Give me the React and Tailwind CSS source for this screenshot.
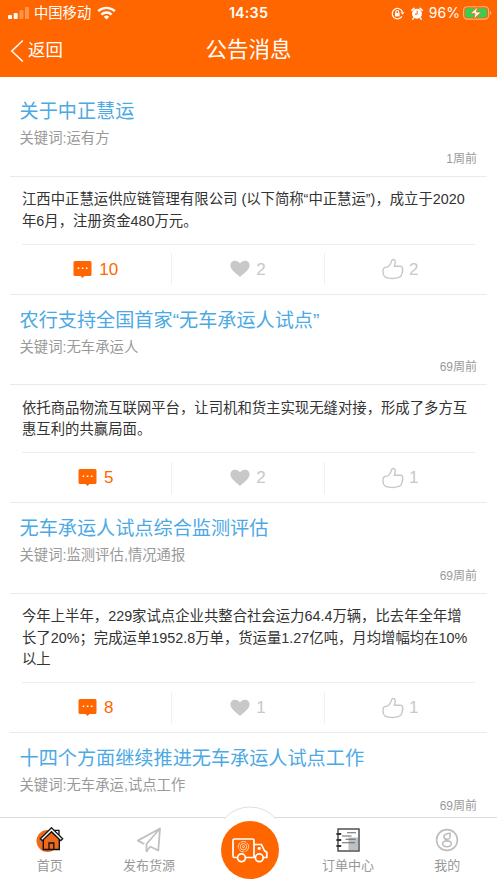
import { Fragment } from 'react';

const notices = [
  {
    id: 1,
    title: '关于中正慧运',
    keywords: '运有方',
    time: '1周前',
    lines: ['江西中正慧运供应链管理有限公司 (以下简称“中正慧运”)，成立于2020', '年6月，注册资金480万元。'],
    comments: 10,
    likes: 2,
    thumbs: 2,
  },
  {
    id: 2,
    title: '农行支持全国首家“无车承运人试点”',
    keywords: '无车承运人',
    time: '69周前',
    lines: ['依托商品物流互联网平台，让司机和货主实现无缝对接，形成了多方互', '惠互利的共赢局面。'],
    comments: 5,
    likes: 2,
    thumbs: 1,
  },
  {
    id: 3,
    title: '无车承运人试点综合监测评估',
    keywords: '监测评估,情况通报',
    time: '69周前',
    lines: ['今年上半年，229家试点企业共整合社会运力64.4万辆，比去年全年增', '长了20%；完成运单1952.8万单，货运量1.27亿吨，月均增幅均在10%', '以上'],
    comments: 8,
    likes: 1,
    thumbs: 1,
  },
  {
    id: 4,
    title: '十四个方面继续推进无车承运人试点工作',
    keywords: '无车承运,试点工作',
    time: '69周前',
  },
];

function StatusBar() {
  return (
    <div className="grid h-[26px] grid-cols-3 items-center px-2">
      <div className="flex items-center">
        <svg width="21" height="14" viewBox="0 0 21 14" fill="#fff">
          <rect x="0" y="9" width="4" height="4" rx="1" />
          <rect x="5.7" y="7" width="4" height="6" rx="1" />
          <rect x="11.4" y="4" width="4" height="9" rx="1" opacity=".3" />
          <rect x="17" y="1" width="4" height="12" rx="1" opacity=".3" />
        </svg>
        <span className="ml-[5px] text-[14.3px] leading-none">中国移动</span>
        <svg className="ml-[6px]" width="19" height="14" viewBox="0 0 19 14" fill="none" stroke="#fff" strokeWidth="2.4">
          <path d="M1.2 5.2a12 12 0 0 1 16.6 0" />
          <path d="M4.4 8.6a7.4 7.4 0 0 1 10.2 0" />
          <path d="M9.5 13.4 6.8 10.7a4 4 0 0 1 5.4 0z" fill="#fff" stroke="none" />
        </svg>
      </div>
      <div className="text-center font-[Inter] text-[14.3px] leading-none font-semibold tracking-[0.2px]">14:35</div>
      <div className="-mr-[3px] flex items-center justify-end">
        <svg width="14" height="13" viewBox="0 0 14 13" fill="none" stroke="#fff" strokeWidth="1.2">
          <path d="M10.9 9.4A5.2 5.2 0 1 1 11.4 5" />
          <path d="M9.5 5.2h4l-2 2.6z" fill="#fff" stroke="none" />
          <rect x="4" y="6" width="4.6" height="3.4" fill="#fff" stroke="none" />
          <path d="M4.9 6V4.9a1.4 1.4 0 0 1 2.8 0V6" />
        </svg>
        <svg className="ml-[6px]" width="12" height="13" viewBox="0 0 12 13">
          <circle cx="6" cy="6.8" r="5" fill="#fff" />
          <path d="M.8 3.2 3 1.2M11.2 3.2 9 1.2M2.6 11l-.8 1.1M9.4 11l.8 1.1" stroke="#fff" strokeWidth="1.5" strokeLinecap="round" />
          <path d="M6.2 3.8v3.4H3.8" fill="none" stroke="#ff6600" strokeWidth="1" />
        </svg>
        <span className="ml-[6px] font-[Inter] text-[14px] leading-none">96%</span>
        <svg className="ml-[3px]" width="29" height="14" viewBox="0 0 29 14">
          <rect x=".6" y=".7" width="25" height="12.4" rx="3.6" fill="none" stroke="#fff" strokeOpacity=".5" strokeWidth="1.1" />
          <rect x="2.2" y="2.3" width="21.6" height="9.2" rx="2.2" fill="#31d158" />
          <path d="M27 5v4q1.4-.6 1.4-2T27 5" fill="#fff" opacity=".5" />
          <path d="M14.8.8 7.4 7.7h4.7l-1.4 5.5 7.7-7.2h-5z" fill="#fff" stroke="#ff6600" strokeWidth=".9" />
        </svg>
      </div>
    </div>
  );
}

function Header() {
  return (
    <header className="h-[77px] shrink-0 bg-[#ff6600] text-white">
      <StatusBar />
      <div className="grid h-[50px] grid-cols-3 items-center px-[10px]">
        <button className="flex items-center text-left">
          <svg className="-mt-px" width="14" height="24" viewBox="0 0 14 24" fill="none" stroke="#fff" strokeWidth="1.5">
            <path d="M12.8 1.5 1.8 12l11 10.5" />
          </svg>
          <span className="ml-[4px] text-[17.4px] leading-none">返回</span>
        </button>
        <h1 className="text-center text-[21.5px] leading-none">公告消息</h1>
      </div>
    </header>
  );
}

function CommentIcon() {
  return (
    <svg width="19" height="19" viewBox="0 0 19 19">
      <path d="M2 1h15a1.5 1.5 0 0 1 1.5 1.5v12A1.5 1.5 0 0 1 17 16h-5.5l-2 2-2-2H2a1.5 1.5 0 0 1-1.5-1.5v-12A1.5 1.5 0 0 1 2 1z" fill="#ff6600" />
      <path d="M4.6 7.4h1.6V9H4.6zM8.8 7.4h1.6V9H8.8zM12.9 7.4h1.6V9h-1.6z" fill="#fff" />
    </svg>
  );
}

function HeartIcon() {
  return (
    <svg width="20" height="18" viewBox="0 0 20 18" fill="#c8c8c8">
      <path d="M10 17C7 14 .4 9.8.4 5.5.4 2.8 2.5.8 5.1.8 7.2.8 9 1.9 10 3.6 11 1.9 12.8.8 14.9.8c2.6 0 4.7 2 4.7 4.7 0 4.3-6.6 8.5-9.6 11.5z" />
    </svg>
  );
}

function ThumbIcon() {
  return (
    <svg width="22" height="22" viewBox="0 0 22 22" fill="none" stroke="#c8c8c8" strokeWidth="1.4" strokeLinejoin="round">
      <path d="M3.6 9.4C6.6 9.4 8 7 9 4.4c.4-1.200.5-2.900 2.100-2.900 1.700 0 2.300 1.500 2.100 3-.1 1.200-.5 2.500-.8 3.800h5.800c2 0 2.900 1.300 2.200 2.700.6.9.5 1.900-.2 2.600.3 1.100 0 2-.7 2.700.1 1.500-.7 2.400-1.900 2.900-2.700 1.200-8.300 1.700-11.400.7-1-.3-2.300-.2-3.200-.9C1.600 18 1 16 1 13.700c0-2.400.4-4.300 2.600-4.300z" />
    </svg>
  );
}

function NoticeItem({ notice }) {
  return (
    <article className="mx-[10px]">
      <div className="h-[90.5px] border-b border-[#eaeaea] px-[10px] pt-[12px]">
        <h2 className="-ml-[0.5px] h-[27px] text-[19.15px] leading-[28px] whitespace-nowrap text-[#4ba9e4]">{notice.title}</h2>
        <p className="-ml-[0.5px] h-[26.5px] text-[14.35px] leading-[26px] text-[#999999]">关键词:{notice.keywords}</p>
        <p className="h-[14px] text-right text-xs leading-[14px] text-[#999999]">{notice.time}</p>
      </div>
      {notice.lines && (
        <>
          <p className="mx-3 border-b border-[#eeeeee] pt-[12.5px] pb-[11.5px] text-[14.37px] leading-[21.5px] whitespace-nowrap text-[#333333]">
            {notice.lines.map((line, i) => (
              <Fragment key={i}>
                {i > 0 && <br />}
                {line}
              </Fragment>
            ))}
          </p>
          <div className="grid h-[50px] grid-cols-3 items-center border-b border-[#eaeaea] px-2 text-[17px] leading-none text-[#c8c8c8]">
            <div className="flex h-8 items-center justify-center gap-[7px] border-r border-[#f0f0f0] pl-[3px] text-[#ff6600]">
              <CommentIcon />
              {notice.comments}
            </div>
            <div className="flex h-8 items-center justify-center gap-[6px] border-r border-[#f0f0f0]">
              <HeartIcon />
              {notice.likes}
            </div>
            <div className="flex h-8 items-center justify-center gap-[5px] pr-[4px]">
              <ThumbIcon />
              {notice.thumbs}
            </div>
          </div>
        </>
      )}
    </article>
  );
}

function HomeIcon() {
  return (
    <svg width="28" height="26" viewBox="0 0 28 26">
      <circle cx="11.5" cy="14" r="11" fill="#ed6a1c" />
      <path d="M19 6V3.3h4v7" fill="#fff" stroke="#111" strokeWidth="1.3" />
      <path d="M7.3 12v10.5h16V12l-8-7.5z" fill="#ed6a1c" stroke="#111" strokeWidth="1.4" />
      <path d="M15.5.8 4.3 11.8l1.9 1.9 9.3-9 9.3 9 1.9-1.9z" fill="#fff" stroke="#111" strokeWidth="1.3" />
      <path d="M13 22.5V16h4.8v6.500" fill="none" stroke="#111" strokeWidth="1.3" />
    </svg>
  );
}

function PlaneIcon() {
  return (
    <svg width="26" height="26" viewBox="0 0 26 26" fill="none" stroke="#c0c0c0" strokeWidth="1.8" strokeLinejoin="round">
      <path d="M10.5 25v-8L24 1.5 1.800 13.600l6.400 3.400M24 1.500l-1.700 22-8.100-4" />
      <path d="m10.500 24.500 3.700-5" />
    </svg>
  );
}

function OrderIcon() {
  return (
    <svg width="24" height="24" viewBox="0 0 24 24" fill="none">
      <path d="M12.5 9.5H22V22h-9.500z" fill="#bcc1c6" />
      <rect x="2" y="1" width="21" height="22" stroke="#444" strokeWidth="1.4" />
      <path d="M11 4.800h9M6 8h9.500M9.500 11.300h10M6 14.700h13" stroke="#666" strokeWidth="1.1" />
      <path d="M.4 6h4.800M.4 12h4.800M.4 18h4.800" stroke="#333" strokeWidth="2" />
    </svg>
  );
}

function UserIcon() {
  return (
    <svg width="24" height="24" viewBox="0 0 24 24" fill="none" stroke="#bdbdbd" strokeWidth="1.6">
      <circle cx="12" cy="12" r="10.4" />
      <path d="M15 5.200c.7 3.800-.2 6.200-2.900 6.200-1.900 0-3.200-1.200-3.200-2.900 0-2.400 2.300-2.900 6.100-3.300z" />
      <ellipse cx="12" cy="15.8" rx="4.4" ry="2.9" />
    </svg>
  );
}

function TruckIcon() {
  return (
    <svg width="36" height="25" viewBox="0 0 36 25" fill="none" stroke="#fff" strokeWidth="1.7" strokeLinejoin="round">
      <path d="M5 19.500H2.500A1.500 1.500 0 0 1 1 18V2.500A1.500 1.500 0 0 1 2.500 1h18A1.500 1.500 0 0 1 22 2.500v17h-9" />
      <path d="M22 6.500h7.500l2.800 6 2.500 2v5h-3.500" />
      <path d="M26 9.500h2.300v1.800H26z" fill="#fff" strokeWidth=".8" />
      <circle cx="9.5" cy="19.8" r="3.9" />
      <circle cx="27.3" cy="19.8" r="3.9" />
      <g strokeWidth=".7">
        <circle cx="11.5" cy="8.7" r="5.2" strokeDasharray="6 1" />
        <circle cx="11.5" cy="8.7" r="3.2" />
        <circle cx="11.5" cy="8.7" r="1" />
      </g>
    </svg>
  );
}

const tabs = [
  { label: '首页', Icon: HomeIcon },
  { label: '发布货源', Icon: PlaneIcon },
  null,
  { label: '订单中心', Icon: OrderIcon },
  { label: '我的', Icon: UserIcon },
];

function TabBar() {
  return (
    <nav className="relative grid h-[66px] shrink-0 grid-cols-5 border-t border-[#dcdcdc] bg-white">
      {/* Bump above the center button */}
      <svg className="absolute -top-[12px] left-[223px]" width="54" height="15" viewBox="0 0 54 15">
        <path d="M0 15 1.500 12.500Q12 1 27 1t25.500 11.500L54 15z" fill="#fff" />
        <path d="M1.500 12.500Q12 1 27 1t25.500 11.500" fill="none" stroke="#dfdfdf" />
      </svg>
      {tabs.map((tab) =>
        tab ? (
          <a key={tab.label} className="flex flex-col items-center">
            <div className="mt-[8px] flex h-[28px] items-center">
              <tab.Icon />
            </div>
            <span className="mt-[2px] text-[13px] leading-[20px] text-[#999999]">{tab.label}</span>
          </a>
        ) : (
          <a key="truck" className="relative flex justify-center">
            <div className="mt-[3px] ml-[3px] flex size-[58px] shrink-0 items-center justify-center rounded-full bg-[#ff6600]">
              <TruckIcon />
            </div>
          </a>
        )
      )}
    </nav>
  );
}

export default function App() {
  return (
    <div className="flex h-[883px] w-[497px] flex-col overflow-hidden bg-white font-['Liberation_Sans','Noto_Sans_CJK_SC',sans-serif]">
      <Header />
      <main className="min-h-0 flex-1 overflow-hidden pt-[9.3px]">
        {notices.map((notice) => (
          <NoticeItem key={notice.id} notice={notice} />
        ))}
      </main>
      <TabBar />
    </div>
  );
}
